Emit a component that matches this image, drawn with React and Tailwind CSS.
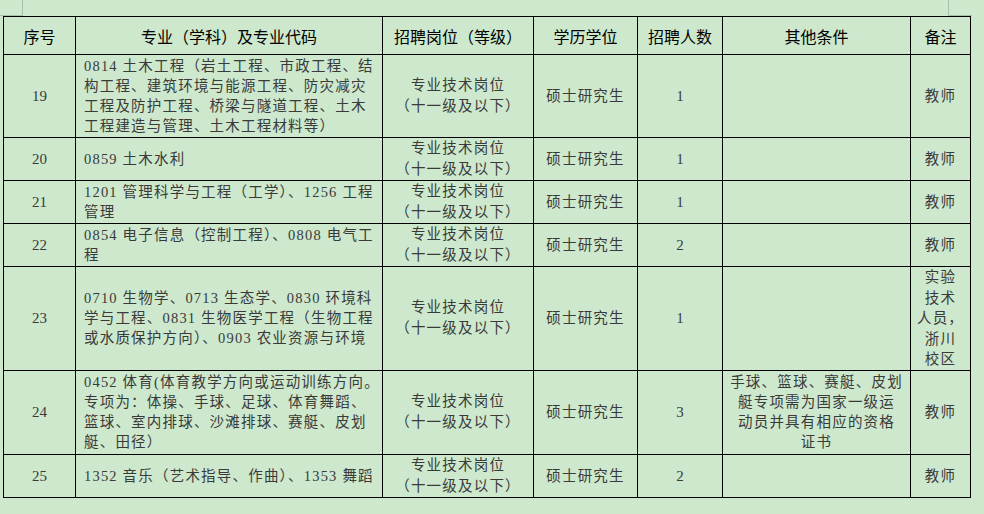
import React from 'react';

const post = ['专业技术岗位', '（十一级及以下）'];

const rows = [
  {
    no: '19',
    h: 'h-[83px]',
    major: ['0814 土木工程（岩土工程、市政工程、结', '构工程、建筑环境与能源工程、防灾减灾', '工程及防护工程、桥梁与隧道工程、土木', '工程建造与管理、土木工程材料等）'],
    count: '1',
    other: [],
    note: ['教师'],
  },
  { no: '20', h: 'h-[41px]', major: ['0859 土木水利'], count: '1', other: [], note: ['教师'] },
  { no: '21', h: 'h-[42px]', major: ['1201 管理科学与工程（工学）、1256 工程', '管理'], count: '1', other: [], note: ['教师'] },
  { no: '22', h: 'h-[41px]', major: ['0854 电子信息（控制工程）、0808 电气工', '程'], count: '2', other: [], note: ['教师'] },
  {
    no: '23',
    h: 'h-[103px]',
    major: ['0710 生物学、0713 生态学、0830 环境科', '学与工程、0831 生物医学工程（生物工程', '或水质保护方向）、0903 农业资源与环境'],
    count: '1',
    other: [],
    note: ['实验', '技术', '人员，', '浙川', '校区'],
  },
  {
    no: '24',
    h: 'h-[84px]',
    major: ['0452 体育(体育教学方向或运动训练方向。', '专项为：体操、手球、足球、体育舞蹈、', '篮球、室内排球、沙滩排球、赛艇、皮划', '艇、田径）'],
    count: '3',
    other: ['手球、篮球、赛艇、皮划', '艇专项需为国家一级运', '动员并具有相应的资格', '证书'],
    note: ['教师'],
  },
  { no: '25', h: 'h-[42px]', major: ['1352 音乐（艺术指导、作曲）、1353 舞蹈'], count: '2', other: [], note: ['教师'] },
];

const headers = ['序号', '专业（学科）及专业代码', '招聘岗位（等级）', '学历学位', '招聘人数', '其他条件', '备注'];

const Lines = ({ lines }) => lines.map((l, i) => <span key={i} className="block whitespace-nowrap">{l}</span>);

export default function App() {
  const td = 'border border-black align-middle p-0';
  return (
    <div className="w-[984px] h-[514px] bg-[#cde8cd] overflow-hidden">
      <div className="flex h-[16px] justify-between">
        <div className="w-[23px] h-[16px] border-r border-b border-[#a9bfa9]" />
        <div className="w-[24px] h-[16px] mr-[12px] border-l border-b border-[#a9bfa9]" />
      </div>
      <table
        className="ml-[3px] w-[967px] table-fixed border-collapse text-[#3a3a3a]"
        style={{ fontFamily: '"Liberation Serif", "Noto Sans CJK SC", serif' }}
      >
        <colgroup>
          <col className="w-[72px]" />
          <col className="w-[307px]" />
          <col className="w-[151px]" />
          <col className="w-[104px]" />
          <col className="w-[85px]" />
          <col className="w-[188px]" />
          <col className="w-[60px]" />
        </colgroup>
        <thead>
          <tr className="h-[38px]">
            {headers.map(h => (
              <th
                key={h}
                className={`${td} font-normal text-[16px] text-black text-center`}
                style={{ fontFamily: '"Noto Sans CJK SC", sans-serif' }}
              >
                {h}
              </th>
            ))}
          </tr>
        </thead>
        <tbody className="text-[14.5px] leading-[20px] tracking-[1.2px]">
          {rows.map(r => (
            <tr key={r.no} className={r.h}>
              <td className={`${td} text-center text-[15px] tracking-normal`}>{r.no}</td>
              <td className={`${td} pl-[8px] text-left`}>
                <Lines lines={r.major} />
              </td>
              <td className={`${td} text-center leading-[21px]`}>
                <Lines lines={post} />
              </td>
              <td className={`${td} text-center`}>硕士研究生</td>
              <td className={`${td} text-center text-[15px] tracking-normal`}>{r.count}</td>
              <td className={`${td} text-center`}>
                <Lines lines={r.other} />
              </td>
              <td className={`${td} text-center ${r.note.length > 1 ? 'leading-[20.5px]' : ''}`}>
                <Lines lines={r.note} />
              </td>
            </tr>
          ))}
        </tbody>
      </table>
    </div>
  );
}
